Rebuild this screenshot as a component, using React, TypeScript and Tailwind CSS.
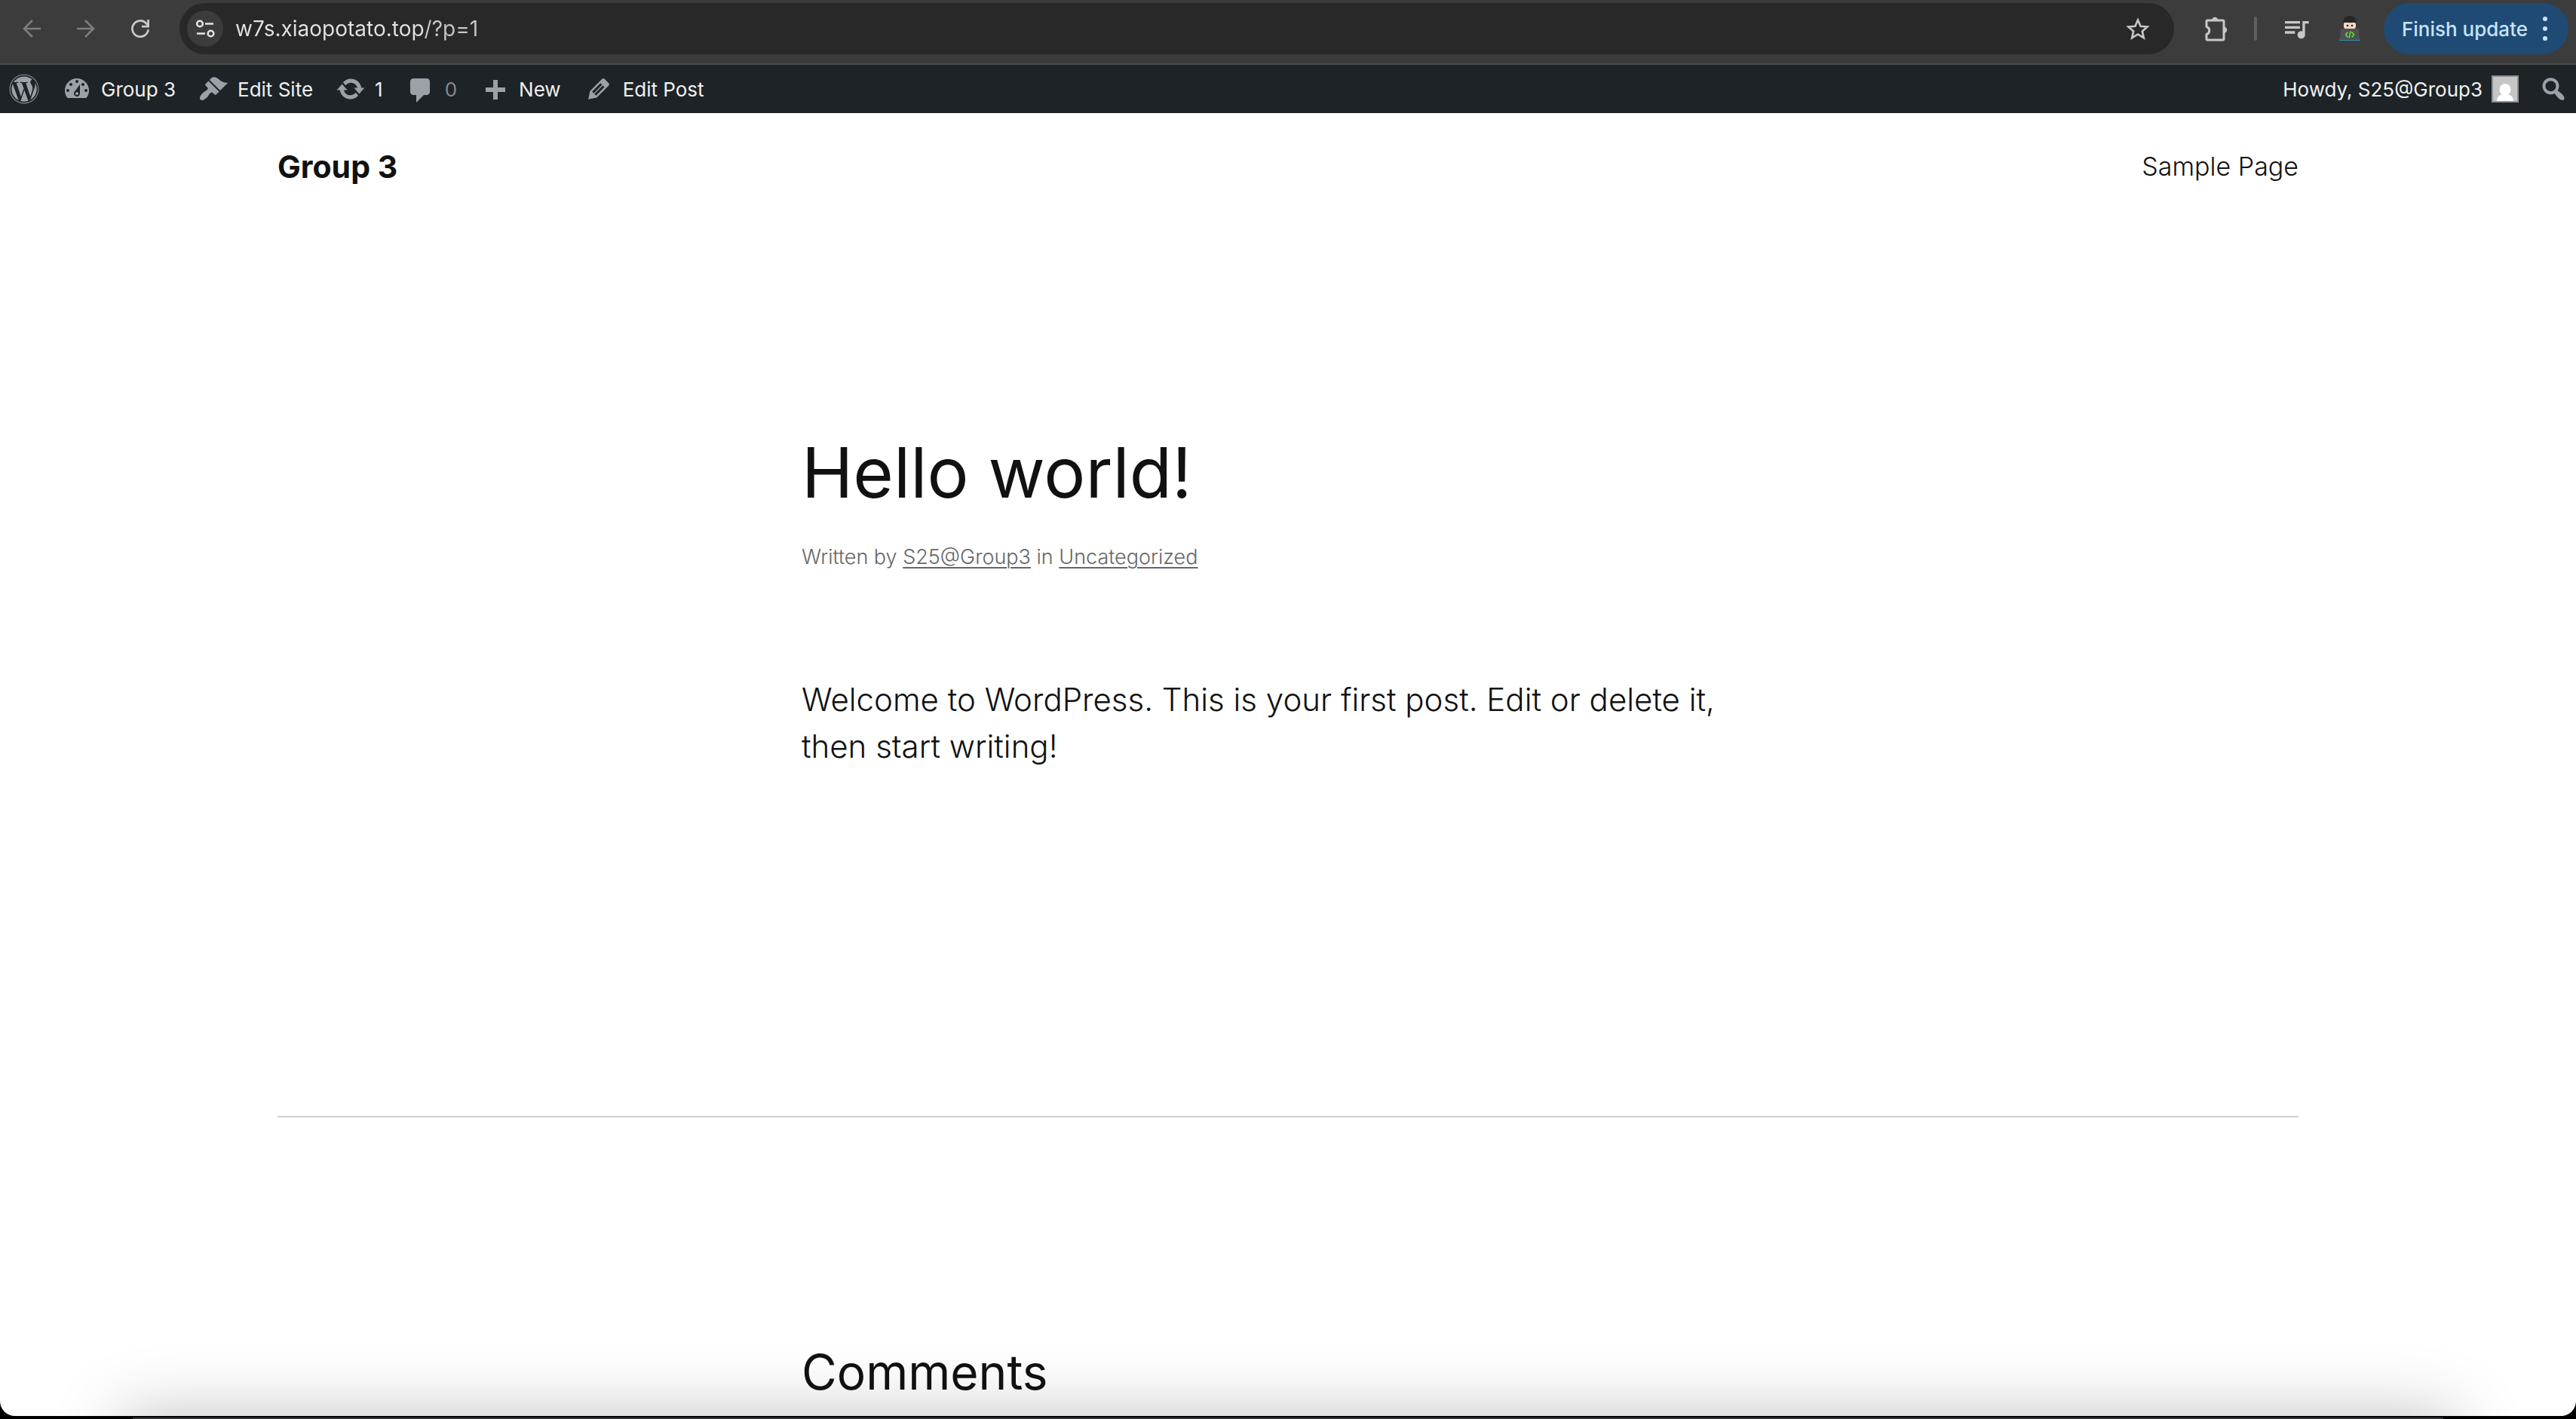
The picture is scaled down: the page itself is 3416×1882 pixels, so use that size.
import type { ReactNode } from "react";
import { FaWordpress } from "react-icons/fa";
import { MdQueueMusic } from "react-icons/md";

const PATHS = {
  dashboard:
    "M3.76 16h12.48c1.1-1.37 1.76-3.11 1.76-5 0-4.42-3.58-8-8-8s-8 3.58-8 8c0 1.89.66 3.63 1.76 5zM10 4c.55 0 1 .45 1 1s-.45 1-1 1-1-.45-1-1 .45-1 1-1zM6 6c.55 0 1 .45 1 1s-.45 1-1 1-1-.45-1-1 .45-1 1-1zm8 0c.55 0 1 .45 1 1s-.45 1-1 1-1-.45-1-1 .45-1 1-1zm-5.37 5.55L12 7v6c0 1.1-.9 2-2 2s-2-.9-2-2c0-.57.24-1.08.63-1.45zM4 10c.55 0 1 .45 1 1s-.45 1-1 1-1-.45-1-1 .45-1 1-1zm12 0c.55 0 1 .45 1 1s-.45 1-1 1-1-.45-1-1 .45-1 1-1zm-5 3c0-.55-.45-1-1-1s-1 .45-1 1 .45 1 1 1 1-.45 1-1z",
  brush:
    "M14.48 11.06L7.41 3.99l1.5-1.5c.5-.56 2.3-.47 3.51.32 1.21.8 1.43 1.28 2.91 2.1 1.18.64 2.45 1.26 4.45.85zm-.71.71L6.7 4.7 4.93 6.47c-.39.39-.39 1.02 0 1.41l1.06 1.06c.39.39.39 1.03 0 1.42-.6.6-1.43 1.11-2.21 1.69-.35.26-.7.53-1.01.84C1.43 14.23.4 16.08 1.4 17.07c.99 1 2.84-.03 4.18-1.36.31-.31.58-.66.85-1.02.57-.78 1.08-1.61 1.69-2.21.39-.39 1.02-.39 1.41 0l1.06 1.06c.39.39 1.02.39 1.41 0z",
  update:
    "M10.2 3.28c3.53 0 6.43 2.61 6.92 6h2.08l-3.5 4-3.5-4h2.32c-.45-1.97-2.21-3.45-4.32-3.45-1.45 0-2.73.71-3.54 1.78L4.95 5.66C6.23 4.2 8.11 3.28 10.2 3.28zm-.4 13.44c-3.52 0-6.43-2.61-6.92-6H.8l3.5-4c1.17 1.33 2.33 2.67 3.5 4H5.48c.45 1.97 2.21 3.45 4.32 3.45 1.45 0 2.73-.71 3.54-1.78l1.71 1.95c-1.28 1.46-3.15 2.38-5.25 2.38z",
  comment:
    "M5 3h9c1.1 0 2 .9 2 2v7c0 1.1-.9 2-2 2h-2l-5 5v-5H5c-1.1 0-2-.9-2-2V5c0-1.1.9-2 2-2z",
  plus: "M17 9v3h-5v5H9v-5H4V9h5V4h3v5h5z",
  edit: "M13.89 3.39l2.71 2.72c.46.46.42 1.24.03 1.64l-8.01 8.02-5.56 1.16 1.16-5.58s7.6-7.63 7.99-8.03c.39-.39 1.22-.39 1.68.07zm-2.73 2.79l-5.59 5.61 1.11 1.11 5.54-5.65zm-2.97 8.23l5.58-5.6-1.07-1.08-5.59 5.6z",
  search:
    "M12.14 4.18c1.87 1.87 2.11 4.75.72 6.89.12.1.22.21.36.31.2.16.47.36.81.59.34.24.56.39.66.47.42.31.73.57.94.78.32.32.6.65.84 1 .25.35.44.69.59 1.04.14.35.21.68.18 1-.02.32-.14.59-.36.81s-.49.34-.81.36c-.31.02-.65-.04-.99-.19-.35-.14-.7-.34-1.04-.59-.35-.24-.68-.52-1-.84-.21-.21-.47-.52-.77-.93-.1-.13-.25-.35-.47-.66-.22-.32-.4-.57-.56-.78-.16-.2-.29-.35-.44-.5-2.07 1.09-4.69.76-6.44-.98-2.14-2.15-2.14-5.64 0-7.78 2.15-2.15 5.63-2.15 7.78 0zm-1.41 6.36c1.36-1.37 1.36-3.58 0-4.95-1.37-1.37-3.59-1.37-4.95 0-1.37 1.37-1.37 3.58 0 4.95 1.36 1.37 3.58 1.37 4.95 0z",
};

function BarIcon({ name }: { name: keyof typeof PATHS }) {
  return (
    <svg viewBox="0 0 20 20" className="size-10 shrink-0 fill-[#9ca1a7]" aria-hidden="true">
      <path fillRule="evenodd" d={PATHS[name]} />
    </svg>
  );
}

function BarLink({ icon, children }: { icon: keyof typeof PATHS; children: ReactNode }) {
  return (
    <a href="#" className="flex h-full items-center gap-3">
      <BarIcon name={icon} />
      {children}
    </a>
  );
}

function BrowserToolbar() {
  return (
    <div className="flex h-[86px] items-start border-b-2 border-[#4a4a4a] bg-[#3c3c3c] pr-2.5 pt-1">
      <div className="flex h-[68px] items-center gap-12 pl-[30px] pr-[40px]">
        <button type="button" aria-label="Back" className="text-[#7d7d7d]">
          <svg viewBox="0 0 24 24" className="size-6" fill="none" stroke="currentColor" strokeWidth="2.6">
            <path d="M24 12H2M13 1 2 12l11 11" />
          </svg>
        </button>
        <button type="button" aria-label="Forward" className="text-[#7d7d7d]">
          <svg viewBox="0 0 24 24" className="size-6" fill="none" stroke="currentColor" strokeWidth="2.6">
            <path d="M0 12h22M11 1l11 11-11 11" />
          </svg>
        </button>
        <button type="button" aria-label="Reload" className="text-[#c7c7c7]">
          <svg viewBox="0 0 24 24" className="size-6" fill="none" stroke="currentColor" strokeWidth="2.8">
            <path d="M22.6 13.2A10.6 10.6 0 1 1 19.5 4.5L23 8.2M22.6 0v9.2H14" />
          </svg>
        </button>
      </div>
      <div className="flex h-[68px] min-w-0 flex-1 items-center rounded-full bg-[#282828] pl-2.5 pr-8">
        <button
          type="button"
          aria-label="Site information"
          className="flex size-12 shrink-0 items-center justify-center rounded-full bg-[#3c3c3c] text-[#e3e3e3]"
        >
          <svg viewBox="0 0 26 24" className="h-6 w-[26px]" fill="none" stroke="currentColor" strokeWidth="2.6">
            <circle cx="6" cy="5.5" r="3.8" />
            <path d="M13 5.5h11M2 18.5h11" />
            <circle cx="20.5" cy="18.5" r="3.8" />
          </svg>
        </button>
        <input
          aria-label="Address"
          type="text"
          defaultValue="w7s.xiaopotato.top/?p=1"
          className="ml-4 min-w-0 flex-1 bg-linear-to-r from-[#e3e3e3] from-[251px] to-[#c7c7c7] to-[251px] bg-clip-text text-[28px] text-transparent outline-none"
        />
        <button type="button" aria-label="Bookmark this page" className="text-[#c7c7c7]">
          <svg viewBox="0 0 32 30" className="h-[30px] w-8" fill="none" stroke="currentColor" strokeWidth="2.6">
            <path d="M16 3.4l3.6 8.3 9 .8-6.8 5.9 2 8.8L16 22.5l-7.8 4.7 2-8.8-6.8-5.9 9-.8z" />
          </svg>
        </button>
      </div>
      <div className="flex h-[68px] items-center pl-[38px] text-[#c7c7c7]">
        <button type="button" aria-label="Extensions">
          <svg viewBox="0 0 36 36" className="size-9" fill="none">
            <path
              d="M5 8.500Q5 7 6.500 7H26.500Q28 7 28 8.500V31.500Q28 33 26.500 33H6.500Q5 33 5 31.500V25.500A5.200 5.200 0 0 0 5 15.500Z"
              stroke="currentColor"
              strokeWidth="3"
              strokeLinejoin="round"
            />
            <path d="M12 7a4.200 4.200 0 0 1 8.400 0zM28 15.500a4.200 4.200 0 0 1 0 8.400z" fill="currentColor" />
          </svg>
        </button>
        <span className="ml-8 h-8 w-1 rounded-full bg-[#5f5f5f]" />
        <button type="button" aria-label="Media controls" className="ml-8">
          <MdQueueMusic className="size-10" />
        </button>
        <button type="button" aria-label="Profile" className="ml-9">
          <svg viewBox="0 0 30 34" className="h-[34px] w-[30px]">
            <path d="M1 33l3-8h22l3 8z" fill="#2f8bab" />
            <path d="M7 9h16v6q-2 4-8 4t-8-4z" fill="#f3d9c4" />
            <path d="M6 10.500Q6 0 15 0t8.500 10.500q-2-2-4-2-5 1.500-9-.500-3 .500-4.500 2.500z" fill="#262626" />
            <circle cx="12" cy="13" r="1.300" fill="#222" />
            <circle cx="18" cy="13" r="1.300" fill="#222" />
            <path d="M3 17h24l1 15H2z" fill="#505050" />
            <path d="M12.500 21.500l-3 3.500 3 3.500M17.500 21.500l3 3.500-3 3.500M16 20.500l-2 9" fill="none" stroke="#5fe83c" strokeWidth="1.500" />
          </svg>
        </button>
        <button
          type="button"
          className="ml-[30px] flex h-[68px] items-center gap-5 rounded-full bg-[#1f4a73] pl-6 pr-7 text-[26px] font-medium text-[#c5e4ff]"
        >
          Finish update
          <svg viewBox="0 0 6 34" className="h-[34px] w-1.5 fill-current" aria-hidden="true">
            <circle cx="3" cy="4" r="3" />
            <circle cx="3" cy="17" r="3" />
            <circle cx="3" cy="30" r="3" />
          </svg>
        </button>
      </div>
    </div>
  );
}

function AdminBar() {
  return (
    <nav className="flex h-16 items-center justify-between bg-[#1d2327] pl-3 pr-2.5 text-[26px] text-[#f0f0f1]">
      <div className="flex h-full items-center gap-[30px]">
        <a href="#" aria-label="About WordPress">
          <FaWordpress className="size-10 text-[#9ca1a7]" />
        </a>
        <BarLink icon="dashboard">Group 3</BarLink>
        <BarLink icon="brush">Edit Site</BarLink>
        <BarLink icon="update">1</BarLink>
        <BarLink icon="comment">
          <span className="text-[#85898d]">0</span>
        </BarLink>
        <BarLink icon="plus">New</BarLink>
        <BarLink icon="edit">Edit Post</BarLink>
      </div>
      <div className="flex h-full items-center gap-[26px]">
        <a href="#" className="flex items-center gap-3">
          Howdy, S25@Group3
          <svg viewBox="0 0 36 36" className="size-9" aria-hidden="true">
            <path d="M0 0h36v36H0z" fill="#8c8f94" />
            <path d="M2 2h32v32H2z" fill="#c5c5c5" />
            <ellipse cx="18" cy="19" rx="7.500" ry="8" fill="#fff" />
            <path d="M7 34q0-9 11-9t11 9z" fill="#fff" />
          </svg>
        </a>
        <button type="button" aria-label="Search">
          <BarIcon name="search" />
        </button>
      </div>
    </nav>
  );
}

export default function App() {
  return (
    <div className="flex min-h-screen flex-col bg-black font-['Inter',sans-serif]">
      <BrowserToolbar />
      <AdminBar />
      <div className="relative flex-1 overflow-hidden rounded-b-[20px] bg-white text-[#111]">
        <div className="mx-auto max-w-[2680px]">
          <header className="flex items-center justify-between pt-10">
            <a href="#" className="text-[41px] leading-[62px] font-bold">
              Group 3
            </a>
            <a href="#" className="text-[34px] leading-[62px] font-light">
              Sample Page
            </a>
          </header>
          <main>
            <article className="mx-auto max-w-[1290px] pt-[321px]">
              <h1 className="text-[92px] leading-[108px]">Hello world!</h1>
              <p className="mt-[38px] text-[27px] leading-10 font-light text-[#666]">
                Written by{" "}
                <a href="#" className="underline decoration-2 underline-offset-4">
                  S25@Group3
                </a>{" "}
                in{" "}
                <a href="#" className="underline decoration-2 underline-offset-4">
                  Uncategorized
                </a>
              </p>
              <p className="mt-[138px] text-[42px] leading-[62px] font-light">
                Welcome to WordPress. This is your first post. Edit or delete it, then start writing!
              </p>
            </article>
            <hr className="mt-[459px] border-t-2 border-[#cfcfcf]" />
            <section className="mx-auto max-w-[1290px] pt-[298px]">
              <h2 className="text-[64px] leading-[80px]">Comments</h2>
            </section>
          </main>
        </div>
        <div className="pointer-events-none absolute inset-x-[160px] -bottom-[140px] h-[140px] shadow-[0_0_90px_0_rgba(0,0,0,0.25)]" />
      </div>
      <div className="mx-[176px] mt-0.5 h-0.5 bg-[#38363a]" />
    </div>
  );
}
